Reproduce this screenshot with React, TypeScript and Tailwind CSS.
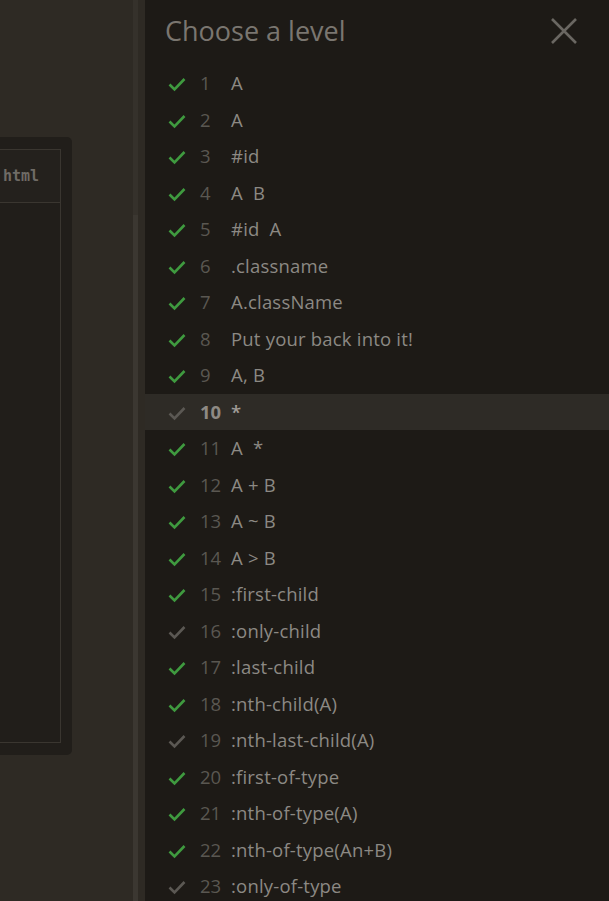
import React from "react";

const levels: { n: number; t: string; done: boolean }[] = [
  { n: 1, t: "A", done: true },
  { n: 2, t: "A", done: true },
  { n: 3, t: "#id", done: true },
  { n: 4, t: "A\u00a0 B", done: true },
  { n: 5, t: "#id\u00a0 A", done: true },
  { n: 6, t: ".classname", done: true },
  { n: 7, t: "A.className", done: true },
  { n: 8, t: "Put your back into it!", done: true },
  { n: 9, t: "A, B", done: true },
  { n: 10, t: "*", done: false },
  { n: 11, t: "A\u00a0 *", done: true },
  { n: 12, t: "A + B", done: true },
  { n: 13, t: "A ~ B", done: true },
  { n: 14, t: "A > B", done: true },
  { n: 15, t: ":first-child", done: true },
  { n: 16, t: ":only-child", done: false },
  { n: 17, t: ":last-child", done: true },
  { n: 18, t: ":nth-child(A)", done: true },
  { n: 19, t: ":nth-last-child(A)", done: false },
  { n: 20, t: ":first-of-type", done: true },
  { n: 21, t: ":nth-of-type(A)", done: true },
  { n: 22, t: ":nth-of-type(An+B)", done: true },
  { n: 23, t: ":only-of-type", done: false },
];

function Check({ green }: { green: boolean }) {
  return (
    <svg width="20" height="20" viewBox="0 0 20 20" className="shrink-0 mt-[2px]">
      <path
        d="M2.5 10.5 L7.5 15.5 L17.5 5"
        fill="none"
        stroke={green ? "#3f9a3f" : "#5b5853"}
        strokeWidth="2.6"
        strokeLinecap="butt"
        strokeLinejoin="miter"
      />
    </svg>
  );
}

export default function App() {
  return (
    <div
      className="w-[609px] h-[901px] overflow-hidden flex bg-[#2e2a24]"
      style={{ fontFamily: '"Open Sans", "Noto Sans", sans-serif' }}
    >
      {/* left area */}
      <div className="w-[133px] shrink-0 flex flex-col">
        <div className="h-[137px] shrink-0" />
        <div className="w-[72px] h-[618px] shrink-0 bg-[#211e1a] rounded-br-[5px] rounded-tr-[5px] pt-[12px] pb-[12px] pr-[11px]">
          <div className="h-full border border-l-0 border-[#3a3630] bg-[#211e1a] flex flex-col">
            <div className="h-[53px] shrink-0 border-b border-[#3a3630] bg-[#24211d] flex items-center pl-[3px]">
              <span
                className="text-[15px] font-bold text-[#6f6b65]"
                style={{ fontFamily: '"DejaVu Sans Mono", "Liberation Mono", monospace' }}
              >
                html
              </span>
            </div>
            <div className="flex-1 bg-[#211e1a]" />
          </div>
        </div>
      </div>
      {/* scrollbar */}
      <div className="w-[5px] shrink-0 bg-[#35312b] flex flex-col">
        <div className="h-[215px] shrink-0" />
        <div className="flex-1 bg-[#3b3731]" />
      </div>
      <div className="w-[7px] shrink-0" />
      {/* level panel */}
      <div className="flex-1 bg-[#1d1a16] flex flex-col">
        <div className="h-[65px] shrink-0 flex items-start justify-between pl-[20px] pr-[30px] pt-[13px]">
          <span className="text-[27px] leading-[36px] text-[#7a7670]">Choose a level</span>
          <svg width="30" height="30" viewBox="0 0 30 30" className="mt-[3px]">
            <path d="M3 3 L27 27 M27 3 L3 27" stroke="#6a6762" strokeWidth="2.6" fill="none" />
          </svg>
        </div>
        <div className="flex flex-col">
          {levels.map((l) => {
            const cur = l.n === 10;
            return (
              <div
                key={l.n}
                className={`h-[36.5px] shrink-0 flex items-center pl-[22px] ${cur ? "bg-[#2e2b26]" : ""}`}
              >
                <Check green={l.done} />
                <span
                  className={`w-[31px] ml-[13px] text-[18.5px] ${cur ? "font-bold text-[#8e8a84]" : "text-[#5a5751]"}`}
                >
                  {l.n}
                </span>
                <span className={`text-[18.5px] tracking-[0.2px] ${cur ? "text-[#a09c96] font-semibold" : "text-[#8c8984]"}`}>
                  {l.t}
                </span>
              </div>
            );
          })}
        </div>
      </div>
    </div>
  );
}
